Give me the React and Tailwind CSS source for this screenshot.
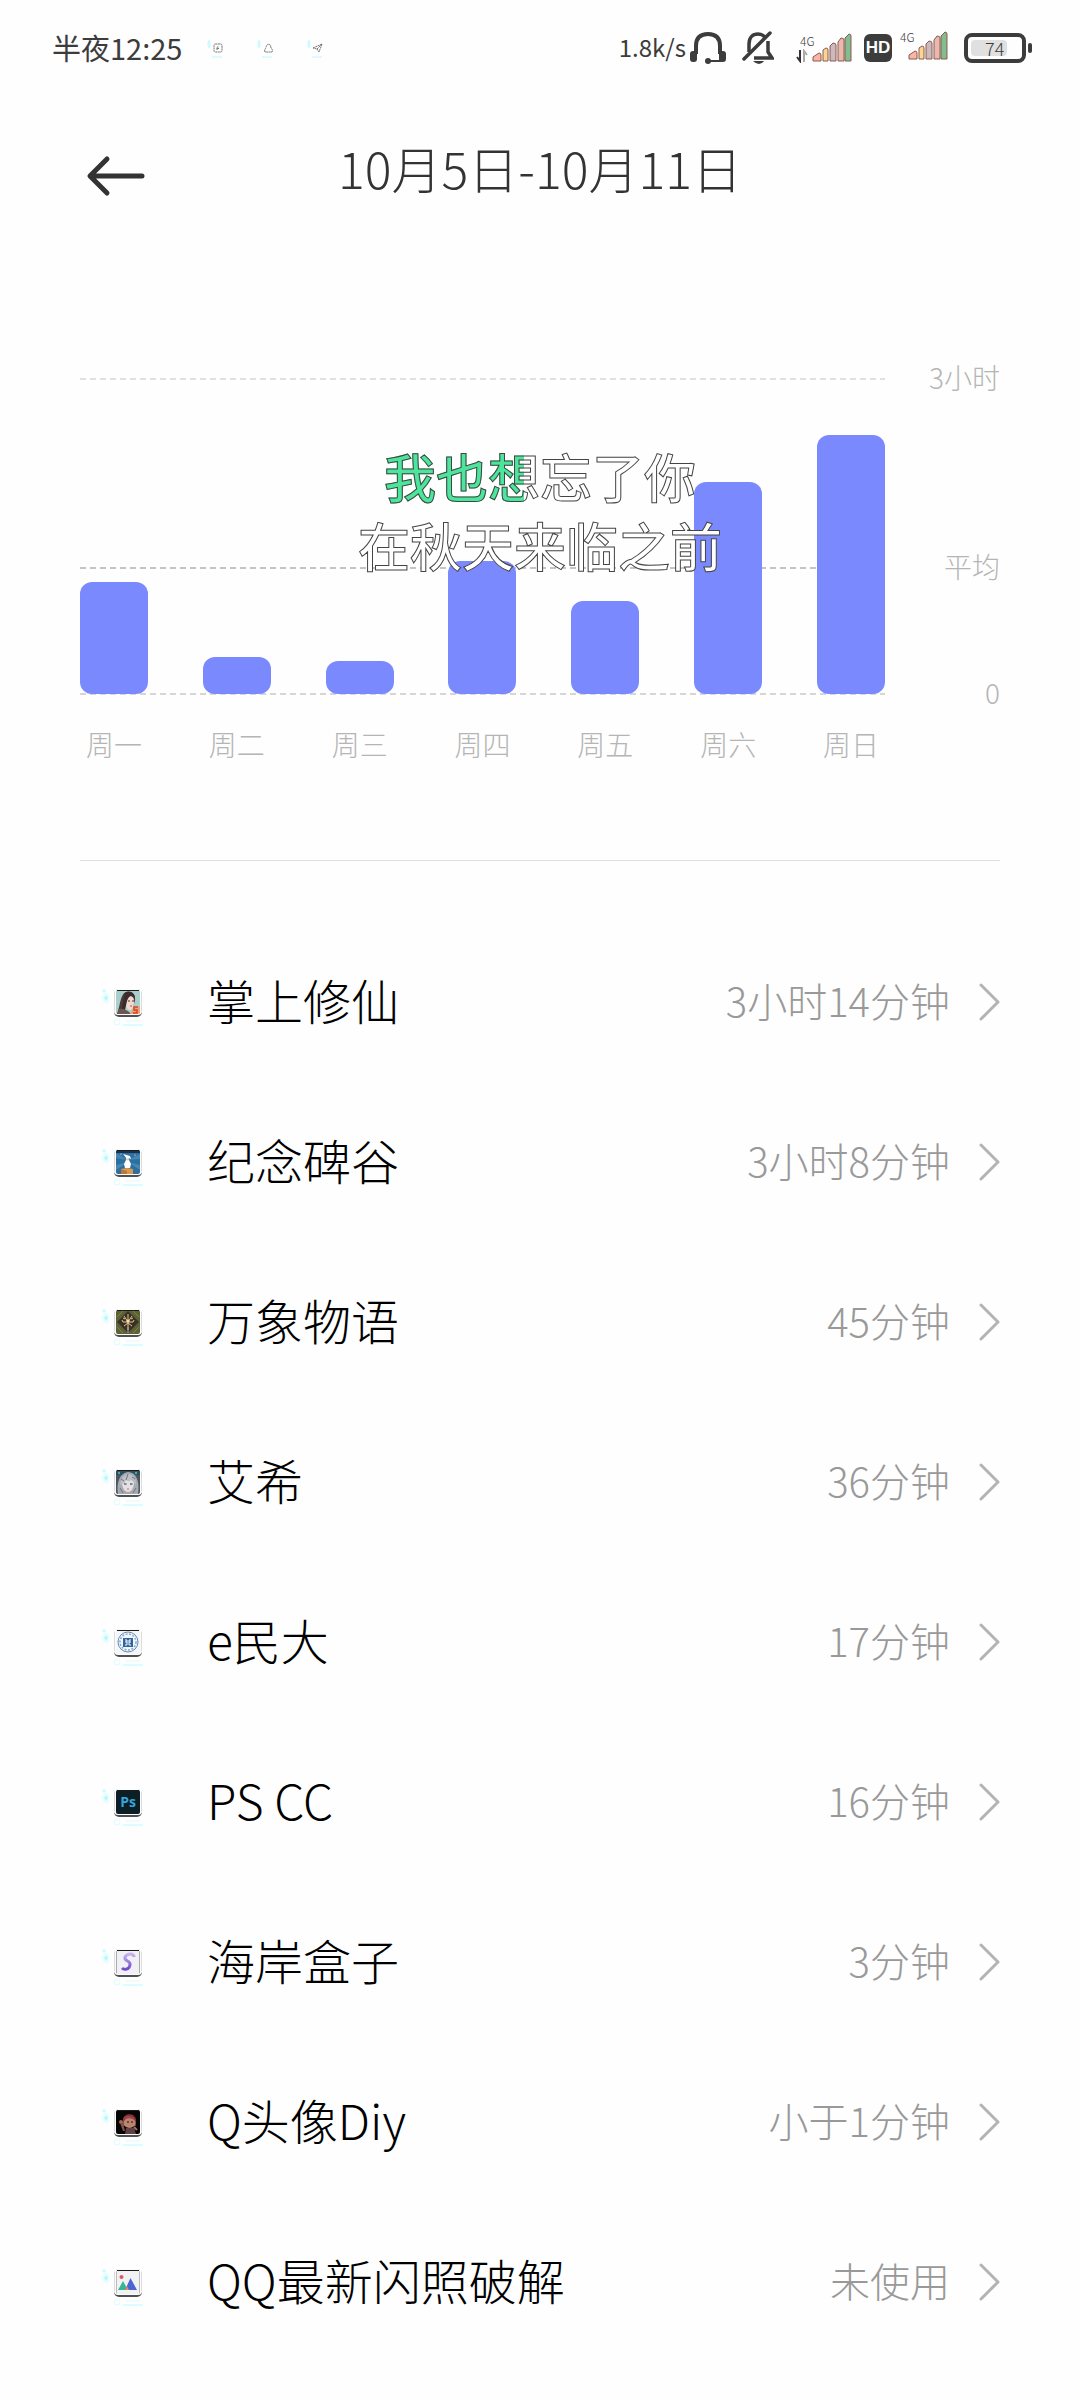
import React from "react";

const MAX_MINUTES = 180;

const days = [
  { label: "周一", minutes: 64 },
  { label: "周二", minutes: 21 },
  { label: "周三", minutes: 19 },
  { label: "周四", minutes: 76 },
  { label: "周五", minutes: 53 },
  { label: "周六", minutes: 121 },
  { label: "周日", minutes: 148 },
];

const gridLines = [
  {
    label: "3小时",
    minutes: 180,
    dash: "bg-[repeating-linear-gradient(90deg,#e0e0e0_0_6px,transparent_6px_10px)]",
  },
  {
    label: "平均",
    minutes: 72,
    dash: "bg-[repeating-linear-gradient(90deg,#c4c4c4_0_6px,transparent_6px_10px)]",
  },
  {
    label: "0",
    minutes: 0,
    dash: "bg-[repeating-linear-gradient(90deg,#d6d6d6_0_6px,transparent_6px_10px)]",
  },
];

const apps = [
  { name: "掌上修仙", time: "3小时14分钟", art: <PortraitArt /> },
  { name: "纪念碑谷", time: "3小时8分钟", art: <ValleyArt /> },
  { name: "万象物语", time: "45分钟", art: <EmblemArt /> },
  { name: "艾希", time: "36分钟", art: <SilverHairArt /> },
  { name: "e民大", time: "17分钟", art: <SealArt /> },
  { name: "PS CC", time: "16分钟", art: <PsArt /> },
  { name: "海岸盒子", time: "3分钟", art: <BoxArt /> },
  { name: "Q头像Diy", time: "小于1分钟", art: <AvatarArt /> },
  { name: "QQ最新闪照破解", time: "未使用", art: <PhotoArt /> },
];

function PortraitArt() {
  return (
    <g>
      <rect width="24" height="24" fill="#a9cfcd" />
      <path d="M1 24C4 18 4 4 10 2c6-2 10 3 9 9l-2 5-5-6-3 6v8Z" fill="#4a3a38" />
      <path d="M11 6c4-1 8 1 7 7-.5 4-2 7-4 7-3 0-4-4-4-7Z" fill="#f3d9cd" />
      <path d="M9 3c5-3 10 0 10 5-3-3-6-3-8 3l-2 9-4 2Z" fill="#3a2c2c" />
      <path d="M3 19c4-1 9 1 12 5H1Z" fill="#6d5650" />
      <path d="M12 11h2M16 11h2" stroke="#403030" strokeWidth="1" />
      <path d="M14 16h2" stroke="#c4504e" strokeWidth="1" />
      <path d="M14 24l3-5 7-3v8Z" fill="#f0a070" />
      <path d="M22 17h-4v3h3v3h-4" stroke="#d8402c" strokeWidth="1.5" fill="none" />
    </g>
  );
}

function ValleyArt() {
  return (
    <g>
      <rect width="24" height="24" fill="#2f6f9e" />
      <path d="M12 10 0 3v5ZM12 10 24 4v5ZM12 12 0 15v5ZM12 12l12 3v5Z" fill="#4388b4" />
      <rect width="24" height="3" fill="#16334e" />
      <path d="M5 19l6-1 6 1v5H5Z" fill="#d99a4e" />
      <path d="M5 19l6 2v3H5Z" fill="#b9783a" />
      <path d="M10 10h3l2 4-1 4h-5l-1-4Z" fill="#fff" />
      <circle cx="11.500" cy="9" r="1.600" fill="#e8d0bc" />
      <path d="M7 4l7 2 1 3-3-1-1 1Z" fill="#fff" />
      <circle cx="5" cy="4" r=".6" fill="#fff" />
      <circle cx="19" cy="5" r=".6" fill="#fff" />
    </g>
  );
}

function EmblemArt() {
  return (
    <g>
      <rect width="24" height="24" fill="#5d6236" />
      <path d="M12 1l11 11-11 11L1 12Z" fill="#3a3026" />
      <path d="M1 17l6 6M17 1l6 6M1 7l6-6M17 23l6-6" stroke="#828446" strokeWidth="1" />
      <g stroke="#e0c58c" strokeWidth="1" fill="none">
        <path d="M12 4v16M12 12 8 6M12 12l4-6M12 12H7l-1-2M12 12h5l1-2M12 13l-4 3M12 13l4 3M9 9l-2-1M15 9l2-1" />
      </g>
      <circle cx="12" cy="11" r="1.600" fill="#f3e2b4" />
      <path d="M12 17v6" stroke="#b7a8b0" strokeWidth="1" />
    </g>
  );
}

function SilverHairArt() {
  return (
    <g>
      <rect width="24" height="24" fill="#4d565e" />
      <path d="M0 0h24v5H0Z" fill="#2f4d5a" />
      <path d="M2 24C0 12 4 3 12 2c8 0 12 9 10 22Z" fill="#a5a9b1" />
      <path d="M6 13c1-5 11-5 12 0 0 5-3 9-6 9s-6-4-6-9Z" fill="#e9dfe0" />
      <path d="M4 15C5 7 9 4 13 4c5 1 7 5 7 11-2-2-3-5-4-6-2 3-4 3-6 1-1 3-3 4-6 5Z" fill="#bcc0c7" />
      <path d="M5 9l3 2M12 4l-2 6M19 9l-3-2M4 18l3 5M20 18l-3 5" stroke="#6f757f" strokeWidth="1" />
      <path d="M8 14h2.500M14 14h2.500" stroke="#37768c" strokeWidth="1.500" />
      <path d="M11 19h2" stroke="#c66d74" strokeWidth="1" />
      <circle cx="3" cy="3" r="1.200" fill="#48a9bd" />
      <circle cx="20" cy="3" r="1.200" fill="#48a9bd" />
    </g>
  );
}

function SealArt() {
  return (
    <g>
      <rect width="24" height="24" fill="#f4f6f8" />
      <circle cx="12" cy="12" r="10" fill="none" stroke="#5d8cbd" strokeWidth="1" />
      <circle cx="12" cy="12" r="8" fill="none" stroke="#86a9cd" strokeWidth="1.500" strokeDasharray="2 1.500" />
      <rect x="7" y="8" width="10" height="9" fill="#2e659f" />
      <path d="M9 10h2v5H9M15 10h-2v5h2M9 12h2M13 12h2" stroke="#fff" strokeWidth="1" fill="none" />
    </g>
  );
}

function PsArt() {
  return (
    <g>
      <rect width="24" height="24" fill="#0c1e26" />
      <text
        x="12"
        y="17"
        textAnchor="middle"
        fontSize="14"
        fontWeight="700"
        fontFamily="'Open Sans', sans-serif"
        fill="#35a4dc"
      >
        Ps
      </text>
    </g>
  );
}

function BoxArt() {
  return (
    <g>
      <defs>
        <linearGradient id="box-letter" x1="0" y1="0" x2="0" y2="1">
          <stop offset="0" stopColor="#c9b6ec" />
          <stop offset="1" stopColor="#7248cf" />
        </linearGradient>
      </defs>
      <rect width="24" height="24" fill="#f1f0f4" />
      <path d="M.5 1v23M23.500 1v23" stroke="#aaa" strokeWidth="1" />
      <path
        d="M18 7c0-4-7-4-9 0-1 5 6 3 5 8-1 5-6 5-8 3"
        fill="none"
        stroke="url(#box-letter)"
        strokeWidth="3"
      />
    </g>
  );
}

function AvatarArt() {
  return (
    <g>
      <rect width="24" height="24" fill="#060505" />
      <path d="M7 10c0-7 12-8 13 0v6H7Z" fill="#82333a" />
      <ellipse cx="13.500" cy="13" rx="6" ry="5" fill="#b98570" />
      <path d="M7 9c2-4 10-4 12 1-4-2-8-2-12-1Z" fill="#a4434a" />
      <circle cx="5" cy="12" r="2" fill="#a36c5a" />
      <path d="M4 13l3 8h2l-2-8Z" fill="#865342" />
      <path d="M9 24l1-6h8l2 6Z" fill="#5f4148" />
      <path d="M11 12h2M15 12h2" stroke="#21130f" strokeWidth="1.200" />
      <path d="M18 17l3 3" stroke="#a36c5a" strokeWidth="2" />
    </g>
  );
}

function PhotoArt() {
  return (
    <g>
      <rect width="24" height="24" fill="#f2f2f5" />
      <path d="M.5 1v23M23.500 1v23" stroke="#bbb" strokeWidth="1" />
      <circle cx="5.500" cy="7" r="2" fill="#e25563" />
      <path d="M2 20l5-9 5 9Z" fill="#38b594" />
      <path d="M9 20l5.500-12L21 20Z" fill="#4b66d2" />
      <path d="M9 20l2-4 2 4Z" fill="#e98c55" />
    </g>
  );
}

function AppIcon({ id, children }) {
  const clip = "icon-clip-" + id;
  const glow = "icon-glow-" + id;
  return (
    <svg width="50" height="48" viewBox="0 0 50 48" className="shrink-0" aria-hidden="true">
      <defs>
        <clipPath id={clip}>
          <rect width="24" height="24" rx="2" />
        </clipPath>
        <radialGradient id={glow}>
          <stop offset="0" stopColor="#5ff3fa" stopOpacity=".8" />
          <stop offset=".35" stopColor="#a5fbff" stopOpacity=".4" />
          <stop offset="1" stopColor="#d5feff" stopOpacity="0" />
        </radialGradient>
      </defs>
      <ellipse cx="8" cy="20" rx="5" ry="7" fill={`url(#${glow})`} />
      <circle cx="6" cy="13" r="3" fill={`url(#${glow})`} />
      <rect x="16" y="11" width="28" height="28" rx="5" fill="#505050" />
      <rect x="16" y="11" width="28" height="26" rx="4" fill="#fbfbfb" />
      <path d="M16.500 14v19M43.500 14v19" stroke="#dcdcdc" strokeWidth="1" />
      <g transform="translate(18 12)">
        <g clipPath={`url(#${clip})`}>{children}</g>
      </g>
      <path d="M19 12.500h22" stroke="#1c1c1c" strokeWidth="1" />
      <g fill="none" stroke="#dcfdff">
        <path d="M28 43h14" strokeWidth="1" />
        <path d="M25 47h20" strokeWidth="2" />
        <circle cx="19" cy="44" r="3" strokeWidth="1" />
      </g>
    </svg>
  );
}

function NotificationIcon({ children }) {
  return (
    <svg width="18" height="22" viewBox="0 0 18 22" aria-hidden="true">
      <ellipse cx="3" cy="7" rx="1.500" ry="4" fill="#c9fbff" />
      <path d="M6 20h10" stroke="#dcfdff" strokeWidth="2" />
      <g fill="none" stroke="#777" strokeWidth="1" strokeDasharray="2 .5">
        {children}
      </g>
    </svg>
  );
}

function SignalBars() {
  return (
    <svg width="40" height="30" viewBox="0 0 40 30" aria-hidden="true">
      <g stroke="#8a5a50" strokeWidth="1">
        <path d="M1 28v-4l6-4q2 0 2 2v6Z" fill="#fbb5a2" />
        <path d="M11 28V17l3-2q2 0 2 2v11Z" fill="#fcd592" />
        <path d="M18 28V13l3-3q3 0 3 2v16Z" fill="#cbb9bb" />
        <path d="M26 28V9l3-4q3 0 3 2v21Z" fill="#eab9ae" />
        <path d="M33 28V5l4-4q2 0 2 2v25Z" fill="#82bd8f" />
      </g>
    </svg>
  );
}

function StatusBar() {
  return (
    <div className="flex h-24 items-center justify-between pr-12 pl-[52px] text-[#3c3c3c]">
      <div className="flex items-center">
        <span className="pb-0.5 text-[29px] leading-10">半夜12:25</span>
        <div className="ml-6 flex items-center gap-8">
          <NotificationIcon>
            <rect x="8" y="7" width="8" height="8" rx="1.500" />
            <path d="M11 13v-3h2M11 11.500h2" />
          </NotificationIcon>
          <NotificationIcon>
            <path d="M9 15c-1-2 0-3 1-4 0-5 5-5 5 0 1 1 2 2 1 4Z" />
          </NotificationIcon>
          <NotificationIcon>
            <path d="M7 11l9-4-3 8-2-3ZM11 12l5-5" />
          </NotificationIcon>
        </div>
      </div>
      <div className="flex items-center">
        <span className="pb-0.5 text-[24px] leading-10">1.8k/s</span>
        <svg className="ml-1" width="36" height="34" viewBox="0 0 36 34" aria-hidden="true">
          <path d="M6 23V15C6 7 10 3 18 3s12 4 12 12v8" fill="none" stroke="#3c3c3c" strokeWidth="4" />
          <rect x="0" y="20" width="7" height="11" rx="3" fill="#3c3c3c" />
          <rect x="29" y="20" width="7" height="11" rx="3" fill="#3c3c3c" />
          <path d="M19 30h12" stroke="#3c3c3c" strokeWidth="2" />
          <circle cx="18" cy="30" r="3" fill="#3c3c3c" />
        </svg>
        <svg className="ml-4" width="32" height="34" viewBox="0 0 32 34" fill="none" stroke="#3c3c3c" aria-hidden="true">
          <path d="M7 21v-8C7 6 11 3 16 3c3 0 5 1 7 3M26 10v11l4 6H12" strokeWidth="3.500" />
          <path d="M2 28 28 2" strokeWidth="3.500" strokeLinecap="round" />
          <path d="M11 30h11q-2 3-5 3t-6-3Z" fill="#3c3c3c" stroke="none" />
        </svg>
        <div className="ml-[22px] flex items-center">
          <div className="flex w-4 flex-col">
            <span className="pl-1 text-[12px] leading-4 font-light">4G</span>
            <svg width="12" height="14" viewBox="0 0 12 14" aria-hidden="true">
              <path d="M4 1v11L1 8" fill="none" stroke="#333" strokeWidth="2" />
              <path d="M8 13V2l3 4" fill="none" stroke="#aaa" strokeWidth="2" />
            </svg>
          </div>
          <SignalBars />
        </div>
        <span className="ml-3 flex h-7 w-7 items-center justify-center rounded-md bg-[#3c3c3c] font-['Liberation_Sans',sans-serif] text-[17px] leading-7 font-bold text-white">
          HD
        </span>
        <div className="ml-2 flex items-start pb-1">
          <span className="w-2 text-[12px] leading-3 font-light">4G</span>
          <SignalBars />
        </div>
        <div className="ml-4 flex items-center gap-0.5">
          <div className="flex h-[30px] w-[62px] items-center rounded-lg border-4 border-[#3c3c3c] px-[3px]">
            <span className="h-4 w-9 rounded-sm bg-[#e0e0e0] pl-3.5 text-[18px] leading-4 font-light">74</span>
          </div>
          <span className="h-2.5 w-1 rounded-sm bg-[#3c3c3c]" />
        </div>
      </div>
    </div>
  );
}

function Header() {
  return (
    <header className="grid h-[154px] grid-cols-[1fr_auto_1fr] items-center px-[86px]">
      <button type="button" aria-label="返回" className="w-16 pt-1.5">
        <svg width="60" height="42" viewBox="0 0 60 42" fill="none" aria-hidden="true">
          <path d="M21 4 4 21l17 17M5 21h51" stroke="#333" strokeWidth="5" strokeLinecap="round" strokeLinejoin="round" />
        </svg>
      </button>
      <h1 className="pb-3 text-[50px] leading-[64px] font-light text-[#333]">10月5日-10月11日</h1>
    </header>
  );
}

function UsageChart() {
  return (
    <section className="relative mx-20 mt-[129px]">
      <div className="relative h-[315px]">
        {gridLines.map((line) => (
          <div
            key={line.label}
            className="absolute inset-x-0 flex h-0 items-center"
            style={{ bottom: `${(line.minutes / MAX_MINUTES) * 100}%` }}
          >
            <div className={`h-0.5 flex-1 ${line.dash}`} />
            <span className="w-[115px] pb-1 text-right text-[28px] leading-9 font-light text-[#b5b5b5]">
              {line.label}
            </span>
          </div>
        ))}
        <div className="relative mr-[115px] flex h-full items-end justify-between">
          {days.map((day) => (
            <div
              key={day.label}
              className="w-[68px] rounded-xl bg-[#7b89ff]"
              style={{ height: `${(day.minutes / MAX_MINUTES) * 100}%` }}
            />
          ))}
        </div>
      </div>
      <div className="mt-8 mr-[115px] flex justify-between">
        {days.map((day) => (
          <span key={day.label} className="w-[68px] text-center text-[28px] leading-9 font-light text-[#b5b5b5]">
            {day.label}
          </span>
        ))}
      </div>
      <div className="absolute inset-x-0 top-[62px] flex flex-col items-center text-[52px] leading-[69px] font-medium">
        <span className="bg-[linear-gradient(90deg,#4be59b_45%,#ffffff_45%)] bg-clip-text text-transparent [-webkit-text-stroke:1px_#444]">
          我也想忘了你
        </span>
        <span className="text-white [-webkit-text-stroke:1px_#444]">在秋天来临之前</span>
      </div>
    </section>
  );
}

function AppRow({ id, app }) {
  return (
    <li>
      <button type="button" className="flex h-40 w-full items-center pr-20 pl-[98px] text-left">
        <AppIcon id={id}>{app.art}</AppIcon>
        <span className="ml-[59px] flex-1 pb-1.5 text-[48px] leading-[64px] font-light text-black">{app.name}</span>
        <span className="pb-1 text-[40px] leading-[56px] font-light text-[#999]">{app.time}</span>
        <svg className="ml-7" width="22" height="40" viewBox="0 0 22 40" fill="none" aria-hidden="true">
          <path d="M3 3l17 17L3 37" stroke="#b3b3b3" strokeWidth="3" strokeLinecap="round" strokeLinejoin="round" />
        </svg>
      </button>
    </li>
  );
}

export default function App() {
  return (
    <main className="min-h-screen overflow-hidden bg-[#fefefe] font-['Noto_Sans_CJK_SC',sans-serif]">
      <StatusBar />
      <Header />
      <UsageChart />
      <hr className="mx-20 mt-[98px] border-t border-[#dedede]" />
      <ul className="pt-[61px]">
        {apps.map((app, index) => (
          <AppRow key={app.name} id={index} app={app} />
        ))}
      </ul>
    </main>
  );
}
